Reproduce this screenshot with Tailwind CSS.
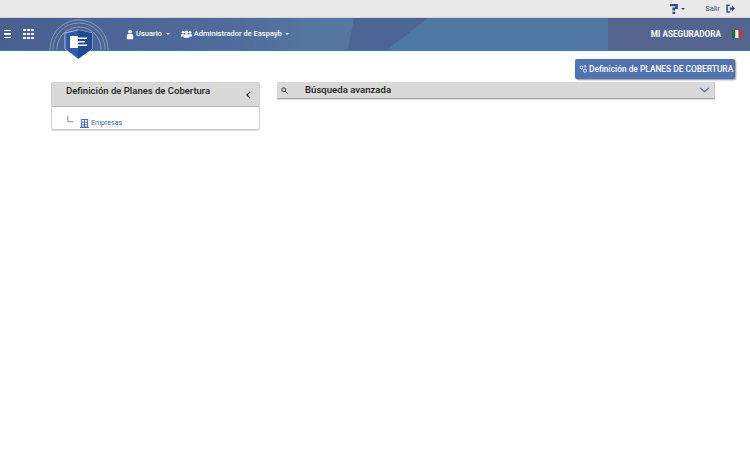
<!DOCTYPE html>
<html lang="es"><head><meta charset="utf-8"><script src="https://cdn.jsdelivr.net/npm/@tailwindcss/browser@4"></script></head>
<body class="bg-white w-[750px] h-[461px] overflow-hidden font-['Roboto',sans-serif]">
<div class="h-[17px] bg-[#e9e9e9] flex items-center justify-end text-[7.5px] text-[#3a4a70]">
  <svg viewBox="0 0 10 13" class="w-[8px] h-[10px] mr-[3px]"><path d="M0 0H10V6.500H6.500V8.500H3V4.500H6.500V3H0Z" fill="#2c4a8c"/><rect x="3" y="10" width="3.500" height="3" fill="#2c4a8c"/></svg>
  <span class="w-0 h-0 border-x-[2.5px] border-x-transparent border-t-[2.5px] border-t-[#3a4a70] mr-[20px]"></span>
  <span class="mr-[6px]">Salir</span>
  <svg viewBox="0 0 12 12" class="w-[9px] h-[9px] mr-[15px]"><path d="M5 1.500H1.500V10.500H5" fill="none" stroke="#2c4a8c" stroke-width="2"/><path d="M5 4.500H8V2L12 6 8 10V7.500H5Z" fill="#2c4a8c"/></svg>
</div>
<header class="relative h-[34px] border-t border-[#d2d2d2] border-b border-b-[#3f78bd] bg-[#4f70a1] flex items-center text-white text-[7.500px] font-medium">
  <svg class="absolute inset-0 w-[750px] h-[32px]" viewBox="0 0 750 32" preserveAspectRatio="none" aria-hidden="true">
    <defs><linearGradient id="g" x1="0" x2="1" y1="0" y2="0"><stop offset="0" stop-color="#49608f"/><stop offset=".3" stop-color="#4f6a9c"/><stop offset=".42" stop-color="#55779f"/><stop offset=".81" stop-color="#4d75a3"/></linearGradient></defs>
    <rect width="750" height="32" fill="url(#g)"/>
    <path d="M354 0H428L387 32H348Z" fill="#4c6496"/>
    <path d="M428 0H608V32H387Z" fill="#5078a5"/>
    <path d="M608 0H750V32H608Z" fill="#54648f"/>
  </svg>
  <button class="relative ml-[4px] flex flex-col gap-[2px] w-[7px]"><i class="block h-[1.500px] bg-white"></i><i class="block h-[1.500px] bg-white"></i><i class="block h-[1.500px] bg-white"></i></button>
  <div class="relative ml-[12px] grid grid-cols-3 gap-[1.500px] w-[11px]">
    <i class="block h-[2.500px] bg-white/90"></i><i class="block h-[2.500px] bg-white/90"></i><i class="block h-[2.500px] bg-white/90"></i><i class="block h-[2.500px] bg-white/90"></i><i class="block h-[2.500px] bg-white/90"></i><i class="block h-[2.500px] bg-white/90"></i><i class="block h-[2.500px] bg-white/90"></i><i class="block h-[2.500px] bg-white/90"></i><i class="block h-[2.500px] bg-white/90"></i>
  </div>
  <svg class="absolute left-[46px] top-0 w-[66px] h-[41px] overflow-visible" viewBox="0 0 66 41" aria-hidden="true">
    <defs><clipPath id="c"><rect x="0" y="0" width="66" height="32"/></clipPath></defs>
    <g fill="none" stroke="#fff" clip-path="url(#c)"><circle cx="33" cy="31" r="29" stroke-opacity=".35"/><circle cx="33" cy="31" r="26" stroke-opacity=".3"/><circle cx="33" cy="31" r="22" stroke-opacity=".35"/></g>
    <path d="M19 15L32 12 46 15V31L32 41 19 31Z" fill="#2f5ca6" stroke="#dfe6f2" stroke-width=".7"/>
    <path d="M32 12L46 15V31L32 41Z" fill="#224a92"/>
    <path d="M24 18H32V19.500H41V21H32V23H39V24.500H32V26.500H41V28H32V30H24Z" fill="#fff"/>
  </svg>
  <svg viewBox="0 0 10 12" class="relative ml-[92px] w-[8px] h-[11px]"><circle cx="5" cy="2.500" r="2.300" fill="#fff"/><path d="M1 12V7.500Q1 5.500 3 5.500H7Q9 5.500 9 7.500V12Z" fill="#fff"/></svg>
  <span class="relative ml-[2px]">Usuario</span>
  <span class="relative ml-[4px] w-0 h-0 border-x-[2.500px] border-x-transparent border-t-[2.500px] border-t-white"></span>
  <svg viewBox="0 0 16 11" class="relative ml-[11px] w-[11px] h-[8px]" fill="#fff"><circle cx="3" cy="3" r="2"/><circle cx="13" cy="3" r="2"/><circle cx="8" cy="3" r="2.600"/><path d="M0 9V7Q0 5.500 2 5.500H4V9Z"/><path d="M12 5.500H14Q16 5.500 16 7V9H12Z"/><path d="M4 11V8Q4 6 6 6H10Q12 6 12 8V11Z"/></svg>
  <span class="relative ml-[2px]">Administrador de Easpayb</span>
  <span class="relative ml-[3px] w-0 h-0 border-x-[2.500px] border-x-transparent border-t-[2.500px] border-t-white"></span>
  <span class="relative ml-auto font-bold text-[8.200px]">MI ASEGURADORA</span>
  <svg viewBox="0 0 10 8" class="relative ml-[11px] mr-[8px] w-[10px] h-[8px]"><rect width="3.400" height="8" fill="#1f6b3a"/><rect x="3.300" width="3.400" height="8" fill="#f4f4f4"/><rect x="6.600" width="3.400" height="8" fill="#c0392b"/></svg>
</header>
<main class="relative">
  <div class="flex justify-end pr-[15px] pt-[8px]">
    <button class="h-[20px] w-[160px] rounded-[2px] bg-[#5272b0] shadow-[1px_1px_2px_rgba(0,0,0,.45)] flex items-center pl-[4px] gap-[2px] text-white text-[8.400px] font-medium whitespace-nowrap">
      <svg viewBox="0 0 10 10" class="w-[8px] h-[8px]" fill="none" stroke="#e7edf7" stroke-width="1.200"><circle cx="3" cy="3" r="1.800"/><circle cx="7.500" cy="7" r="2"/><circle cx="7.500" cy="1.800" r="1"/></svg>
      Definición de PLANES DE COBERTURA
    </button>
  </div>
  <div class="flex items-start pl-[51px] pt-[3px]">
    <section class="w-[209px] h-[48px] rounded-[2px] border border-[#d0d0d0] shadow-[0_1px_1px_rgba(0,0,0,.15)]">
      <div class="h-[24px] bg-[#d9d9d9] border-b border-[#b5b5b5] flex items-start pl-[14px] pt-[1px] pr-[8px] text-[9.500px] font-medium text-[#1b1b1b]">
        <h2 class="leading-[13px]">Definición de Planes de Cobertura</h2>
        <svg viewBox="0 0 6 10" class="ml-auto mt-[7px] w-[5px] h-[8px]" fill="none" stroke="#222" stroke-width="1.500"><path d="M5 1L1 5 5 9"/></svg>
      </div>
      <div class="flex items-center pl-[15px] pt-[11px] text-[7px] text-[#3b62a8]">
        <svg viewBox="0 0 8 8" class="w-[7px] h-[7px] self-start -mt-[2px]" fill="none" stroke="#6f7f98"><path d="M1 0V6.500H7"/></svg>
        <svg viewBox="0 0 10 10" class="ml-[6px] w-[9px] h-[9px]" fill="none" stroke="#3b62a8"><rect x="1.500" y=".5" width="7" height="8.500"/><path d="M0 9.500H10M1.500 3.500H8.500M1.500 6.500H8.500M5 .5V9"/></svg>
        <span class="ml-[2px]">Empresas</span>
      </div>
    </section>
    <section class="ml-[17px] w-[438px] h-[17px] rounded-[1px] bg-[#d9d9d9] border-b border-b-[#a9a9a9] border-r border-r-[#c4c4c4] shadow-[0_1px_1px_rgba(0,0,0,.15)] flex items-center text-[9.600px] font-medium text-[#1b1b1b]">
      <svg viewBox="0 0 10 10" class="ml-[4px] w-[7px] h-[7px]" fill="none" stroke="#333" stroke-width="1.400"><circle cx="4" cy="4" r="2.800"/><path d="M6 6L9.500 9.500"/></svg>
      <h2 class="ml-[17px]">Búsqueda avanzada</h2>
      <svg viewBox="0 0 12 7" class="ml-auto mr-[4px] w-[11px] h-[6px]" fill="none" stroke="#3f6cb4" stroke-width="1.500"><path d="M1 1L6 5.500 11 1"/></svg>
    </section>
  </div>
</main>
</body></html>
